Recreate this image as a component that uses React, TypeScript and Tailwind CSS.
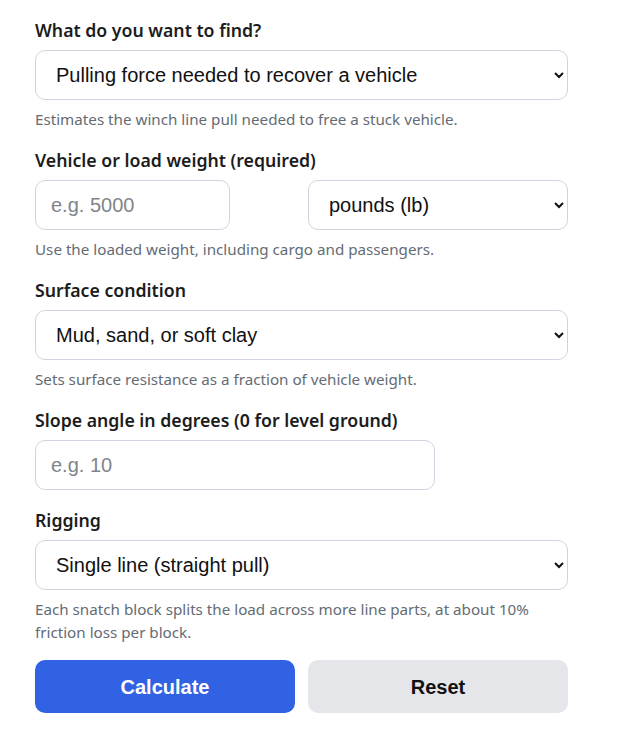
import React from 'react';

const labelCls = "block text-[17.7px] leading-6 font-semibold text-[#1c1c1c] mb-2 font-['Noto_Sans',sans-serif]";
const hintCls = "mt-2 text-[15.2px] leading-[23px] text-[#646b74] font-['Noto_Sans',sans-serif]";
const fieldCls =
  "h-[50px] rounded-[10px] border border-[#cfd5de] bg-white text-[20px] text-[#111] font-['Liberation_Sans',Arial,sans-serif] outline-none";

export default function App() {
  return (
    <div className="w-[637px] min-h-[737px] bg-white pt-[18px] pl-[35px]">
      <form className="w-[533px] flex flex-col gap-[17px]" onSubmit={(e) => e.preventDefault()}>
        <div>
          <label className={labelCls}>What do you want to find?</label>
          <select className={`${fieldCls} w-full pl-4 pr-2`} defaultValue="pull">
            <option value="pull">Pulling force needed to recover a vehicle</option>
            <option value="weight">Maximum vehicle weight for a winch</option>
          </select>
          <p className={hintCls}>Estimates the winch line pull needed to free a stuck vehicle.</p>
        </div>

        <div>
          <label className={labelCls}>Vehicle or load weight (required)</label>
          <div className="flex justify-between">
            <input
              type="text"
              placeholder="e.g. 5000"
              className={`${fieldCls} w-[195px] px-[15px] placeholder:text-[#80858c]`}
            />
            <select className={`${fieldCls} w-[260px] pl-4 pr-2`} defaultValue="lb">
              <option value="lb">pounds (lb)</option>
              <option value="kg">kilograms (kg)</option>
            </select>
          </div>
          <p className={hintCls}>Use the loaded weight, including cargo and passengers.</p>
        </div>

        <div>
          <label className={labelCls}>Surface condition</label>
          <select className={`${fieldCls} w-full pl-4 pr-2`} defaultValue="mud">
            <option value="mud">Mud, sand, or soft clay</option>
            <option value="hard">Hard surface</option>
          </select>
          <p className={hintCls}>Sets surface resistance as a fraction of vehicle weight.</p>
        </div>

        <div className="pb-px">
          <label className={labelCls}>Slope angle in degrees (0 for level ground)</label>
          <input
            type="text"
            placeholder="e.g. 10"
            className={`${fieldCls} w-[400px] px-[15px] placeholder:text-[#80858c]`}
          />
        </div>

        <div>
          <label className={labelCls}>Rigging</label>
          <select className={`${fieldCls} w-full pl-4 pr-2`} defaultValue="single">
            <option value="single">Single line (straight pull)</option>
            <option value="double">Double line (one snatch block)</option>
          </select>
          <p className={hintCls}>
            Each snatch block splits the load across more line parts, at about 10% friction loss per block.
          </p>
        </div>

        <div className="flex gap-[13px] -mt-px">
          <button
            type="submit"
            className="flex-1 h-[53px] rounded-[10px] bg-[#3062e3] text-white text-[20px] font-bold font-['Liberation_Sans',Arial,sans-serif]"
          >
            Calculate
          </button>
          <button
            type="reset"
            className="flex-1 h-[53px] rounded-[10px] bg-[#e5e6ea] text-[#111] text-[20px] font-bold font-['Liberation_Sans',Arial,sans-serif]"
          >
            Reset
          </button>
        </div>
      </form>
    </div>
  );
}
